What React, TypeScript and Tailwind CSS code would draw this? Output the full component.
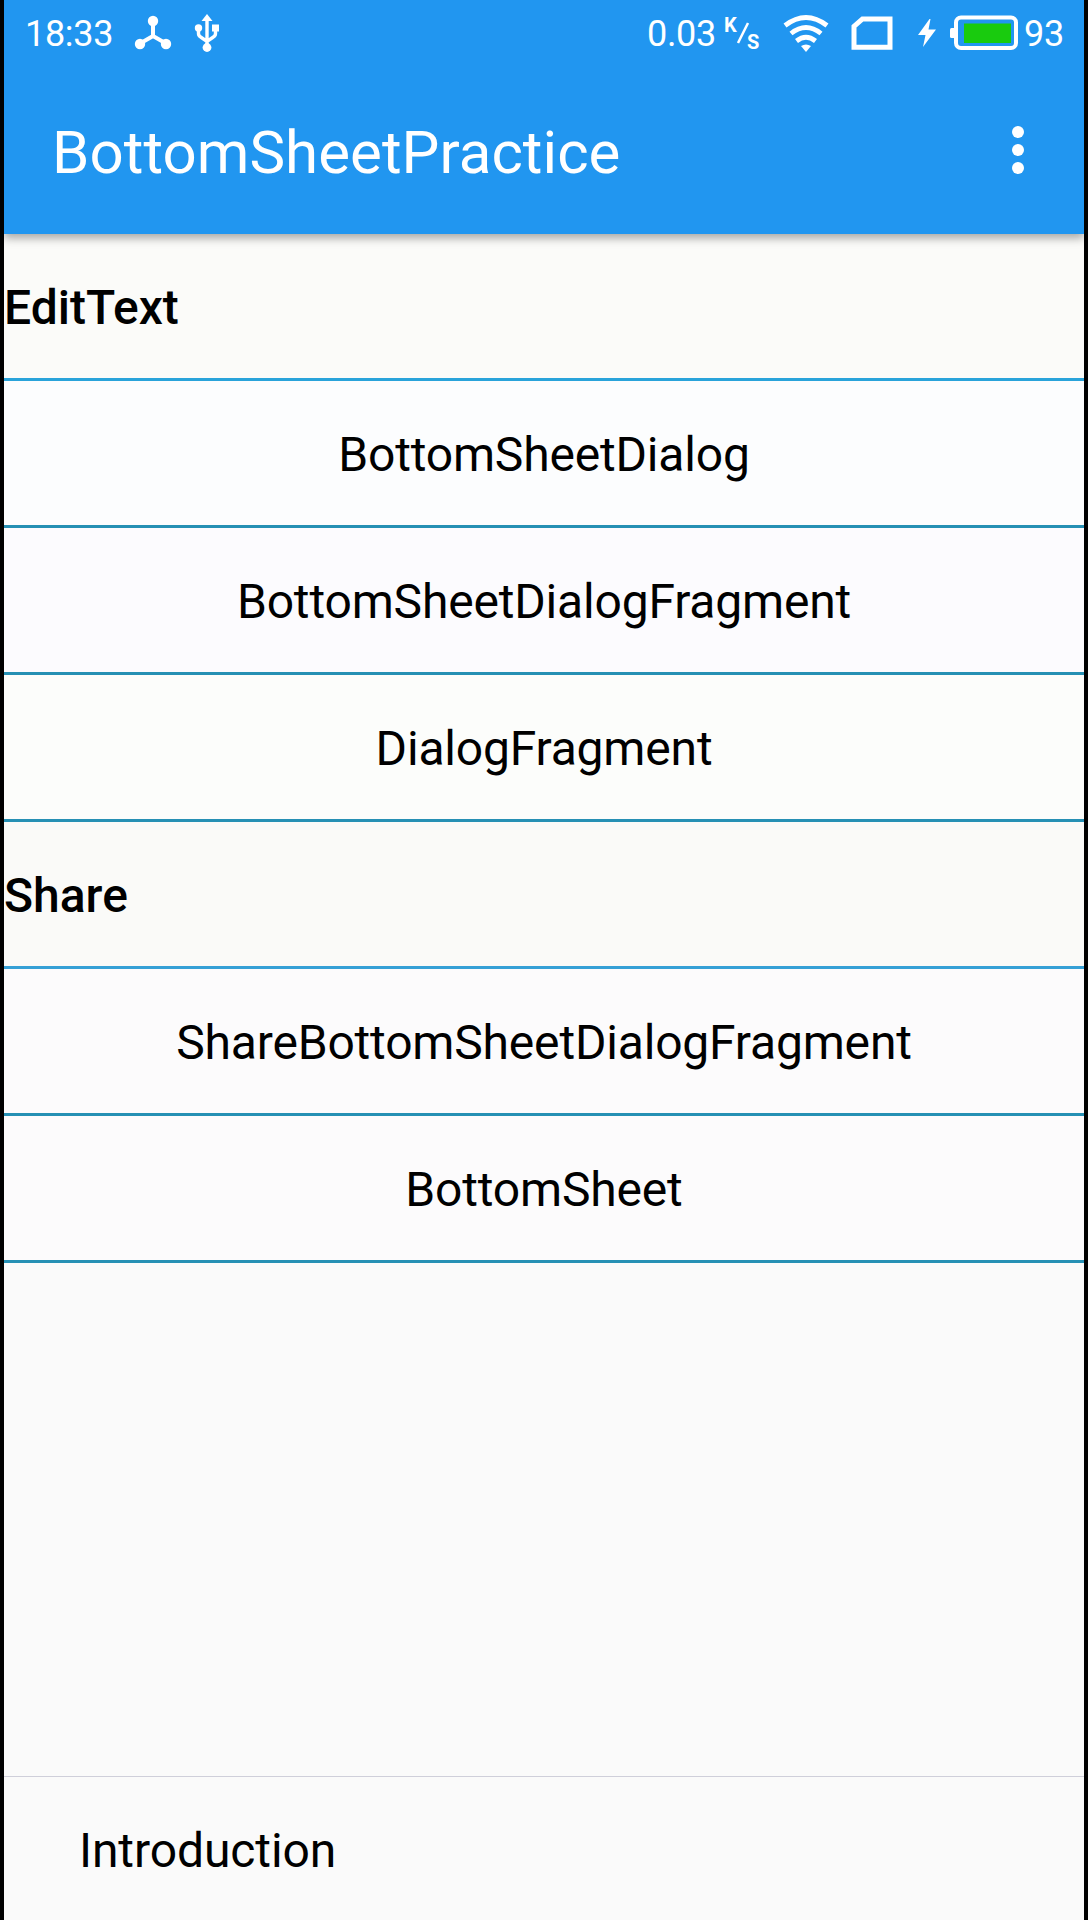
type Row = { label: string; header?: boolean; line: string; bg: string };

const rows: Row[] = [
  { label: 'EditText', header: true, line: 'border-[#29a3da]', bg: 'bg-[#fbfbf9]' },
  { label: 'BottomSheetDialog', line: 'border-[#2690b4]', bg: 'bg-[#fcfdfe]' },
  { label: 'BottomSheetDialogFragment', line: 'border-[#2690b4]', bg: 'bg-[#fcfbfe]' },
  { label: 'DialogFragment', line: 'border-[#2690b4]', bg: 'bg-[#fcfdfb]' },
  { label: 'Share', header: true, line: 'border-[#35a0d6]', bg: 'bg-[#fafaf8]' },
  { label: 'ShareBottomSheetDialogFragment', line: 'border-[#2690b4]', bg: 'bg-[#fcfbfc]' },
  { label: 'BottomSheet', line: 'border-[#2690b4]', bg: 'bg-[#fcfbfc]' },
];

function HubIcon() {
  return (
    <svg className="ml-[21px] h-[36px] w-[38px]" viewBox="0 0 38 36" fill="white" stroke="white">
      <path d="M19 6V21L6 28.500M19 21L32 28.500" fill="none" strokeWidth="4" />
      <circle cx="19" cy="6" r="5.200" stroke="none" />
      <circle cx="6" cy="29" r="5.200" stroke="none" />
      <circle cx="32" cy="29" r="5.200" stroke="none" />
    </svg>
  );
}

function UsbIcon() {
  return (
    <svg className="ml-[22px] h-[40px] w-[26px]" viewBox="0 0 26 40" fill="white">
      <path d="M13 1L18.500 8H7.500Z" />
      <path
        d="M13 6V34M4.500 15V20.500Q4.500 23 7 24.300L13 28.500L19 24.300Q21.500 23 21.500 20.500V15"
        fill="none"
        stroke="white"
        strokeWidth="3.400"
      />
      <circle cx="4.500" cy="15" r="3.700" />
      <rect x="18" y="11.500" width="7" height="7" />
      <circle cx="13" cy="34.500" r="4.400" />
    </svg>
  );
}

function WifiIcon() {
  return (
    <svg className="h-[40px] w-[46px]" viewBox="0 0 46 40" fill="none" stroke="white" strokeWidth="4.800">
      <path d="M2 12.500Q23 -3.500 44 12.500" />
      <path d="M8 20.500Q23 8.500 38 20.500" />
      <path d="M13.500 28Q23 20.500 32.500 28" />
      <path d="M18 33Q23 30 28 33L23 39Z" fill="white" stroke="none" />
    </svg>
  );
}

function StatusBar() {
  return (
    <div className="flex h-[66px] items-center pl-[21px] text-[36px] leading-[42px] tracking-[-0.3px]">
      <span className="w-[88px] pt-[2px]">18:33</span>
      <HubIcon />
      <UsbIcon />
      <div className="ml-auto flex items-center">
        <span className="w-[70px] pt-[2px]">0.03</span>
        <div className="relative ml-[7px] h-[40px] w-[38px] text-[20px] font-bold leading-[20px]">
          <span className="absolute left-0 top-[2px]">K</span>
          <svg className="absolute left-[12px] top-[9px] h-[22px] w-[14px]" viewBox="0 0 14 22">
            <path d="M2 21L12 1" stroke="white" strokeWidth="2.500" />
          </svg>
          <span className="absolute left-[23px] top-[19px]">S</span>
        </div>
        <div className="ml-[21px] flex">
          <WifiIcon />
        </div>
        <svg className="ml-[22px] h-[34px] w-[42px]" viewBox="0 0 42 34" fill="none">
          <path d="M3 31.200V10.500L11.500 3H39V31.200Z" stroke="white" strokeWidth="5" />
        </svg>
        <svg className="ml-[24px] h-[30px] w-[20px]" viewBox="0 0 20 30">
          <path d="M12.500 1L1 17H8.500L6 29L19 11.500H11.500L13.500 1Z" fill="white" />
        </svg>
        <svg className="ml-[13px] h-[36px] w-[69px]" viewBox="0 0 69 36">
          <rect x="0" y="13" width="6" height="10" rx="1.500" fill="white" />
          <rect x="6" y="2.500" width="60" height="30.500" rx="5" fill="none" stroke="white" strokeWidth="4" />
          <rect x="14" y="8.500" width="47" height="19.500" fill="#19cb0e" />
        </svg>
        <span className="ml-[5px] w-[60px] pt-[2px]">93</span>
      </div>
    </div>
  );
}

export default function App() {
  return (
    <div className="flex h-[1920px] w-[1088px] flex-col border-x-4 border-black bg-[#fafafa] font-['Roboto',sans-serif] text-black">
      <header className="relative z-10 h-[234px] shrink-0 bg-[#2196f0] text-white shadow-[0_4px_9px_rgba(0,0,0,0.35)]">
        <StatusBar />
        <div className="flex h-[168px] items-center justify-between pl-[48px] pr-[60px]">
          <h1 className="pt-[5px] text-[60px] font-normal leading-[70px] tracking-[0.05px]">BottomSheetPractice</h1>
          <button aria-label="More options" className="flex flex-col gap-[6px] pb-[1px]">
            <span className="size-[12px] rounded-full bg-white" />
            <span className="size-[12px] rounded-full bg-white" />
            <span className="size-[12px] rounded-full bg-white" />
          </button>
        </div>
      </header>
      <main className="flex-1">
        {rows.map((row) => (
          <div
            key={row.label}
            className={`flex h-[147px] items-center border-b-[3px] pt-[4px] text-[48px] leading-[56px] ${row.line} ${row.bg} ${
              row.header ? 'justify-start font-medium' : 'justify-center tracking-[-0.18px]'
            }`}
          >
            {row.label}
          </div>
        ))}
      </main>
      <footer className="flex h-[144px] items-center border-t border-[#cfcfda] pl-[75px] pt-[4px] text-[48px] leading-[56px] tracking-[-0.1px]">
        Introduction
      </footer>
    </div>
  );
}
